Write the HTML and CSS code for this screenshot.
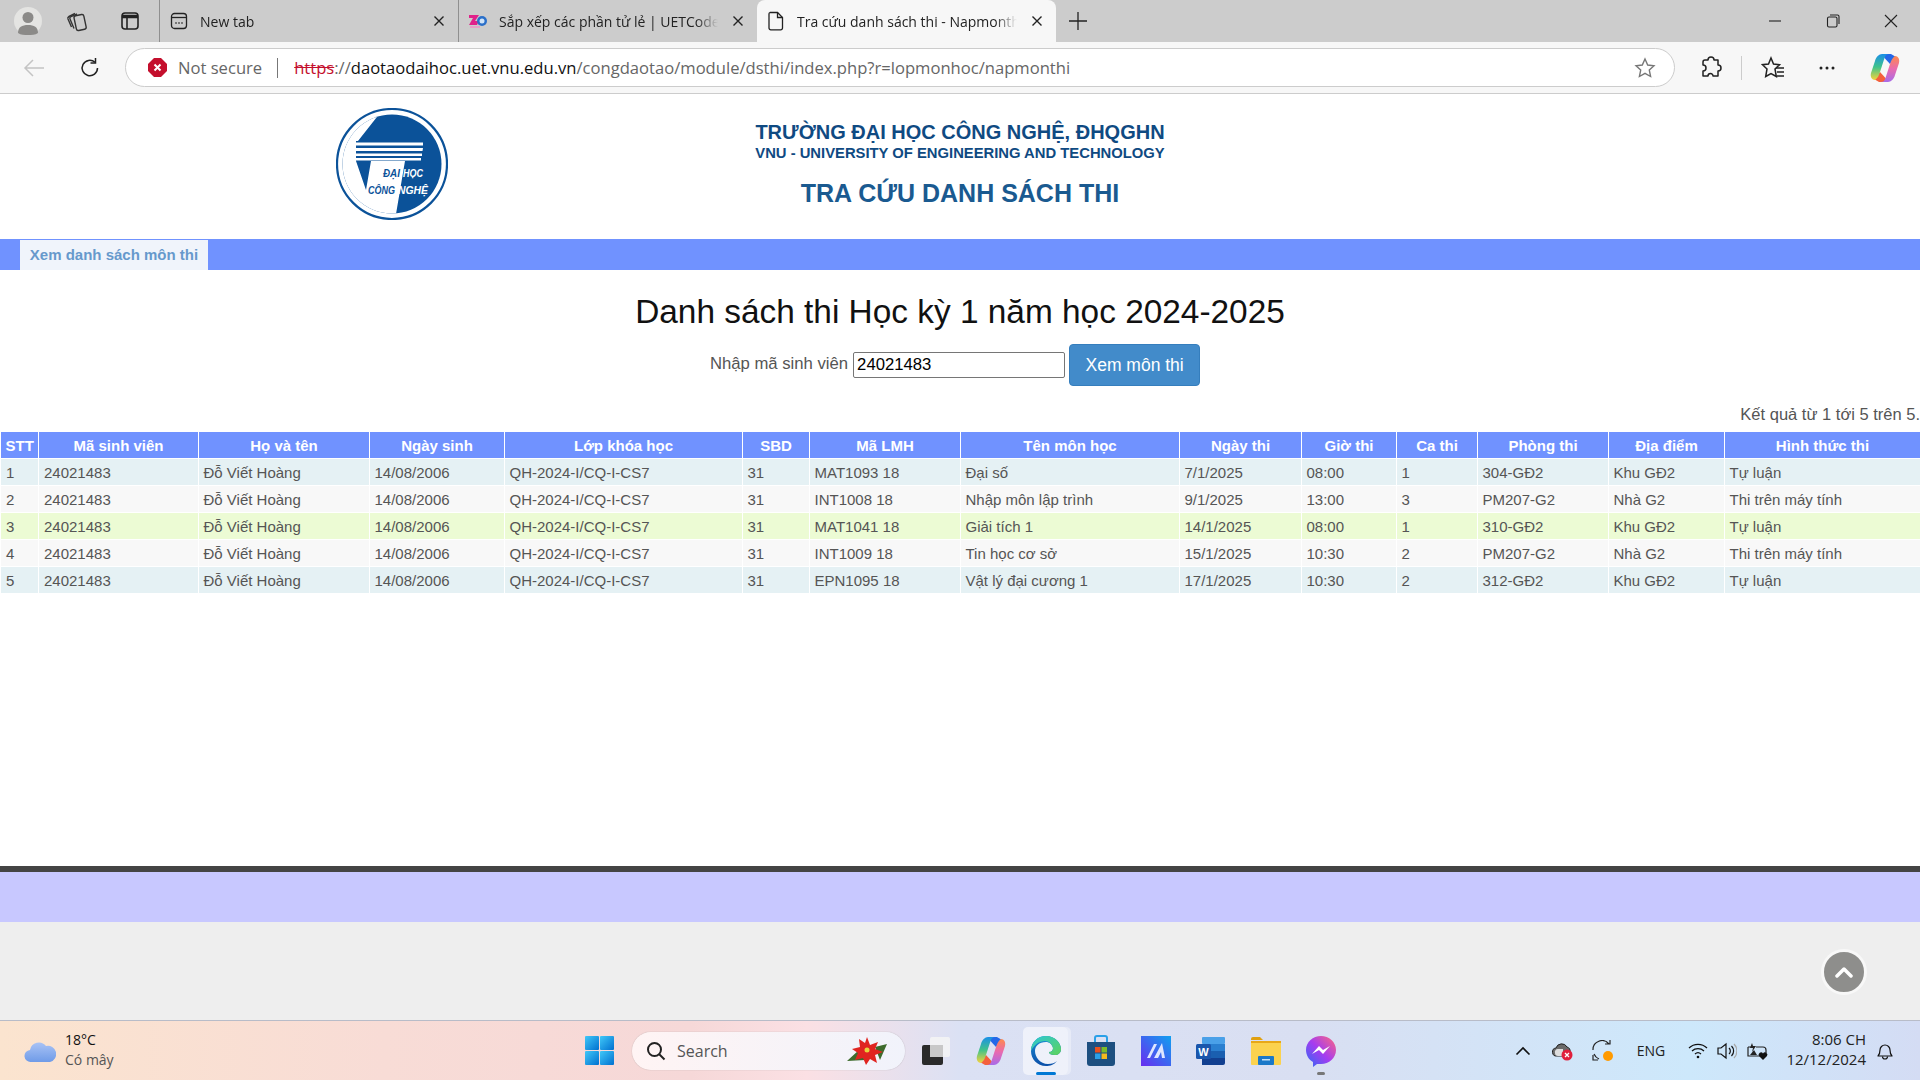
FILE: index.html
```html
<!DOCTYPE html>
<html lang="vi">
<head>
    <meta charset="UTF-8">
    <title>Tra cứu danh sách thi - Napmonthi</title>
    <link rel="stylesheet" href="styles.css">
</head>
<body>
    <svg class="defs" width="0" height="0">
        <defs>
            <linearGradient id="cpA" x1="0" y1="0" x2="0" y2="1"><stop offset="0" stop-color="#1a8fe8"/><stop offset=".5" stop-color="#3fc38a"/><stop offset="1" stop-color="#f5d33c"/></linearGradient>
            <linearGradient id="cpB" x1="0" y1="0" x2="0" y2="1"><stop offset="0" stop-color="#ff8a4c"/><stop offset=".5" stop-color="#e86ab0"/><stop offset="1" stop-color="#a86be8"/></linearGradient>
            <linearGradient id="edgeA" x1="0" y1="0" x2="1" y2="1"><stop offset="0" stop-color="#2bc7d8"/><stop offset="1" stop-color="#5fd35a"/></linearGradient>
            <linearGradient id="edgeB" x1="0" y1="0" x2="0" y2="1"><stop offset="0" stop-color="#1a8fd8"/><stop offset="1" stop-color="#0c4fa8"/></linearGradient>
            <linearGradient id="appG" x1="0" y1="1" x2="1" y2="0"><stop offset="0" stop-color="#6a2cf0"/><stop offset="1" stop-color="#10a0f0"/></linearGradient>
            <linearGradient id="msgG" x1="0" y1="1" x2="1" y2="0"><stop offset="0" stop-color="#2a6cf5"/><stop offset=".5" stop-color="#a63cf0"/><stop offset="1" stop-color="#ff6a7c"/></linearGradient>
            <linearGradient id="winG" x1="0" y1="0" x2="1" y2="1"><stop offset="0" stop-color="#40c8f8"/><stop offset="1" stop-color="#0070d0"/></linearGradient>
            <symbol id="copilot" viewBox="0 0 32 32">
                <path d="M13 2h9l5 3-6 7-5.500-6z" fill="#2468e8"/>
                <path d="M19 30h-9l-5-3 6-7 5.500 6z" fill="#f4603c"/>
                <path d="M13 2h7c-2 0-3.500 1-4.500 4L11 20c-1 3-2 6-5 8-3 0-5-3-4-7L6 9c1-4 4-7 7-7z" fill="url(#cpA)"/>
                <path d="M19 30h-7c2 0 3.500-1 4.500-4L21 12c1-3 2-6 5-8 3 0 5 3 4 7l-4 12c-1 4-4 7-7 7z" fill="url(#cpB)"/>
            </symbol>
        </defs>
    </svg>

    <div class="tabstrip">
        <span class="profile">
            <svg width="28" height="28" viewBox="0 0 28 28"><circle cx="14" cy="14" r="14" fill="#e4e4e2"/><circle cx="14" cy="10.5" r="5.5" fill="#8b8a88"/><path d="M4 26c0-6 4-8 10-8s10 2 10 8c-3 2-6 2-10 2s-7 0-10-2z" fill="#8b8a88"/></svg>
        </span>
        <span class="strip-btn strip-btn-first">
            <svg width="22" height="22" viewBox="0 0 22 22" fill="none" stroke="#333" stroke-width="1.4"><rect x="9" y="5" width="10" height="15" rx="2" transform="rotate(-12 14 12)"/><path d="M8 18.5 4 9c-.4-1 0-2 1-2.400l6-2.600"/><path d="M5.500 17 2 9c-.4-1 0-2 1-2.500l6-3"/></svg>
        </span>
        <span class="strip-btn strip-btn-views">
            <svg width="20" height="20" viewBox="0 0 20 20" fill="none" stroke="#222" stroke-width="1.6"><rect x="2" y="2" width="16" height="16" rx="3"/><path d="M2 5.500h16" stroke-width="3.500"/><path d="M7 6v12"/></svg>
        </span>

        <div class="tab">
            <svg class="tab-icon" width="18" height="18" viewBox="0 0 18 18" fill="none" stroke="#222" stroke-width="1.3"><rect x="1.500" y="1.500" width="15" height="15" rx="3"/><path d="M1.500 5.500h15"/><path d="M5.500 11h1M8.500 11h1M11.500 11h1" stroke-width="1.800"/></svg>
            <span class="tab-title">New tab</span>
            <svg class="tab-close" width="12" height="12" viewBox="0 0 12 12" stroke="#222" stroke-width="1.400"><path d="M1.500 1.500l9 9M10.500 1.500l-9 9"/></svg>
        </div>
        <div class="tab">
            <svg class="tab-icon" width="18" height="18" viewBox="0 0 18 18"><path d="M0 3h10L6 9h4l-2 4H0l4-7H0z" fill="#e0218a"/><circle cx="13" cy="9" r="5" fill="#2a6fc9"/><circle cx="13" cy="9" r="2.500" fill="#cfe3f7"/><rect x="1" y="14" width="10" height="2" fill="#e8a0c8"/></svg>
            <span class="tab-title">Sắp xếp các phần tử lẻ | UETCode</span>
            <svg class="tab-close" width="12" height="12" viewBox="0 0 12 12" stroke="#222" stroke-width="1.400"><path d="M1.500 1.500l9 9M10.500 1.500l-9 9"/></svg>
        </div>
        <div class="tab tab-active">
            <svg class="tab-icon" width="18" height="20" viewBox="0 0 18 20" fill="none" stroke="#222" stroke-width="1.300"><path d="M3 1.500h7.500l5 5V17a1.800 1.800 0 0 1-1.800 1.800H3.800A1.800 1.800 0 0 1 2 17V3a1.500 1.500 0 0 1 1-1.500z"/><path d="M10.500 1.500v5h5"/></svg>
            <span class="tab-title">Tra cứu danh sách thi - Napmonthi</span>
            <svg class="tab-close" width="12" height="12" viewBox="0 0 12 12" stroke="#222" stroke-width="1.400"><path d="M1.500 1.500l9 9M10.500 1.500l-9 9"/></svg>
        </div>
        <span class="new-tab">
            <svg width="18" height="18" viewBox="0 0 18 18" stroke="#222" stroke-width="1.300"><path d="M9 0v18M0 9h18"/></svg>
        </span>

        <div class="window-btns">
            <span class="window-btn"><svg width="14" height="14" viewBox="0 0 14 14" stroke="#222" stroke-width="1.100"><path d="M1 7h12"/></svg></span>
            <span class="window-btn"><svg width="14" height="14" viewBox="0 0 14 14" fill="none" stroke="#222" stroke-width="1.100"><rect x="1.500" y="3" width="9.500" height="10" rx="1.500"/><path d="M4 1h7.500A1.500 1.500 0 0 1 13 2.500V10"/></svg></span>
            <span class="window-btn"><svg width="14" height="14" viewBox="0 0 14 14" stroke="#222" stroke-width="1.100"><path d="M1 1l12 12M13 1L1 13"/></svg></span>
        </div>
    </div>

    <div class="toolbar">
        <span class="tool-btn tool-back">
            <svg width="22" height="20" viewBox="0 0 22 20" fill="none" stroke="#c4c4c4" stroke-width="1.500"><path d="M21 10H2M10 2l-8 8 8 8"/></svg>
        </span>
        <span class="tool-btn tool-reload">
            <svg width="22" height="22" viewBox="0 0 22 22" fill="none" stroke="#222" stroke-width="1.500"><path d="M18.500 11a7.700 7.700 0 1 1-2.500-5.700"/><path d="M16.500 1v5h-5"/></svg>
        </span>
        <div class="address">
            <svg class="secure-icon" width="19" height="19" viewBox="0 0 19 19"><path d="M6 0h7l6 6v7l-6 6H6l-6-6V6z" fill="#c40f2d"/><path d="M6.500 6.500l6 6M12.500 6.500l-6 6" stroke="#fff" stroke-width="2"/></svg>
            <span class="secure-text">Not secure</span>
            <span class="address-sep"></span>
            <span class="url"><span class="url-https">https</span>://<span class="url-host">daotaodaihoc.uet.vnu.edu.vn</span>/congdaotao/module/dsthi/index.php?r=lopmonhoc/napmonthi</span>
            <svg class="star-icon" width="22" height="22" viewBox="0 0 22 22" fill="none" stroke="#777" stroke-width="1.400"><path d="M11 2l2.700 6 6.300.7-4.700 4.400 1.300 6.400-5.600-3.200-5.600 3.200 1.300-6.400L2 8.700 8.300 8z"/></svg>
        </div>
        <span class="tool-btn tool-ext">
            <svg width="22" height="24" viewBox="0 0 22 24" fill="none" stroke="#222" stroke-width="1.500"><path d="M8 4a3 3 0 0 1 6 0h4v5a3 3 0 0 1 0 6v5h-5a2.500 2.500 0 0 0-5 0H3v-5a3 3 0 0 0 0-6V6a2 2 0 0 1 2-2z" stroke-linejoin="round"/></svg>
        </span>
        <span class="tool-sep"></span>
        <span class="tool-btn tool-fav">
            <svg width="24" height="24" viewBox="0 0 24 24" fill="none" stroke="#222" stroke-width="1.500"><path d="M10 2l2.500 6 6 .7-4.500 4.300 1.300 7.500-5.300-3-5.300 3L6 13 1.500 8.700l6-.7z"/><path d="M15 12h8M16 16h7M16 20h7" stroke-width="1.300"/></svg>
        </span>
        <span class="tool-btn tool-more">
            <svg width="18" height="4" viewBox="0 0 18 4" fill="#222"><circle cx="3" cy="2" r="1.500"/><circle cx="9" cy="2" r="1.500"/><circle cx="15" cy="2" r="1.500"/></svg>
        </span>
        <svg class="tool-copilot" width="32" height="32"><use href="#copilot"/></svg>
    </div>

    <div class="page">
        <header class="site-head">
            <svg class="logo" width="112" height="112" viewBox="0 0 112 112">
                <clipPath id="logoDisc"><circle cx="56" cy="56" r="49.500"/></clipPath>
                <circle cx="56" cy="56" r="55" fill="#fff" stroke="#0b5299" stroke-width="2.200"/>
                <g clip-path="url(#logoDisc)">
                    <rect width="112" height="112" fill="#0b5299"/>
                    <path d="M0 0h48L22 33h-2v20l10 29 5-29h34l-10 59H0z" fill="#fff"/>
                    <path d="M20 34.500h67v3H20zM20 40h67l-.5 3H20zM20 45.500h66v2.500H20zM20 50h65v2.500H20z" fill="#fff"/>
                </g>
                <text class="logo-dark" x="47" y="69" textLength="17" lengthAdjust="spacingAndGlyphs">ĐẠI</text>
                <text class="logo-light" x="67" y="69" textLength="20" lengthAdjust="spacingAndGlyphs">HỌC</text>
                <text class="logo-dark" x="32" y="86" textLength="27" lengthAdjust="spacingAndGlyphs">CÔNG</text>
                <text class="logo-light" x="62" y="86" textLength="30" lengthAdjust="spacingAndGlyphs">NGHỆ</text>
            </svg>
            <div class="site-title">
                <div class="site-name">TRƯỜNG ĐẠI HỌC CÔNG NGHỆ, ĐHQGHN</div>
                <div class="site-sub">VNU - UNIVERSITY OF ENGINEERING AND TECHNOLOGY</div>
                <div class="site-lookup">TRA CỨU DANH SÁCH THI</div>
            </div>
        </header>

        <nav class="menu"><a class="menu-item">Xem danh sách môn thi</a></nav>

        <main class="content">
            <h1>Danh sách thi Học kỳ 1 năm học 2024-2025</h1>
            <div class="search-row">
                <label for="msv">Nhập mã sinh viên</label>
                <input type="text" id="msv" value="24021483">
                <button class="btn">Xem môn thi</button>
            </div>
            <div class="summary">Kết quả từ 1 tới 5 trên 5.</div>
            <table class="exam-table">
                <colgroup>
                    <col class="c-stt"><col class="c-msv"><col class="c-name"><col class="c-dob"><col class="c-class">
                    <col class="c-sbd"><col class="c-lmh"><col class="c-subject"><col class="c-date"><col class="c-time">
                    <col class="c-shift"><col class="c-room"><col class="c-place"><col class="c-form">
                </colgroup>
                <thead>
                    <tr>
                        <th>STT</th><th>Mã sinh viên</th><th>Họ và tên</th><th>Ngày sinh</th><th>Lớp khóa học</th>
                        <th>SBD</th><th>Mã LMH</th><th>Tên môn học</th><th>Ngày thi</th><th>Giờ thi</th>
                        <th>Ca thi</th><th>Phòng thi</th><th>Địa điểm</th><th>Hình thức thi</th>
                    </tr>
                </thead>
                <tbody>
                    <tr class="row-odd">
                        <td>1</td><td>24021483</td><td>Đỗ Viết Hoàng</td><td>14/08/2006</td><td>QH-2024-I/CQ-I-CS7</td>
                        <td>31</td><td>MAT1093 18</td><td>Đại số</td><td>7/1/2025</td><td>08:00</td>
                        <td>1</td><td>304-GĐ2</td><td>Khu GĐ2</td><td>Tự luận</td>
                    </tr>
                    <tr class="row-even">
                        <td>2</td><td>24021483</td><td>Đỗ Viết Hoàng</td><td>14/08/2006</td><td>QH-2024-I/CQ-I-CS7</td>
                        <td>31</td><td>INT1008 18</td><td>Nhập môn lập trình</td><td>9/1/2025</td><td>13:00</td>
                        <td>3</td><td>PM207-G2</td><td>Nhà G2</td><td>Thi trên máy tính</td>
                    </tr>
                    <tr class="row-hover">
                        <td>3</td><td>24021483</td><td>Đỗ Viết Hoàng</td><td>14/08/2006</td><td>QH-2024-I/CQ-I-CS7</td>
                        <td>31</td><td>MAT1041 18</td><td>Giải tích 1</td><td>14/1/2025</td><td>08:00</td>
                        <td>1</td><td>310-GĐ2</td><td>Khu GĐ2</td><td>Tự luận</td>
                    </tr>
                    <tr class="row-even">
                        <td>4</td><td>24021483</td><td>Đỗ Viết Hoàng</td><td>14/08/2006</td><td>QH-2024-I/CQ-I-CS7</td>
                        <td>31</td><td>INT1009 18</td><td>Tin học cơ sở</td><td>15/1/2025</td><td>10:30</td>
                        <td>2</td><td>PM207-G2</td><td>Nhà G2</td><td>Thi trên máy tính</td>
                    </tr>
                    <tr class="row-odd">
                        <td>5</td><td>24021483</td><td>Đỗ Viết Hoàng</td><td>14/08/2006</td><td>QH-2024-I/CQ-I-CS7</td>
                        <td>31</td><td>EPN1095 18</td><td>Vật lý đại cương 1</td><td>17/1/2025</td><td>10:30</td>
                        <td>2</td><td>312-GĐ2</td><td>Khu GĐ2</td><td>Tự luận</td>
                    </tr>
                </tbody>
            </table>
        </main>

        <footer class="site-foot">
            <div class="foot-bar"></div>
            <div class="foot-rest"></div>
        </footer>

        <a class="to-top">
            <svg width="18" height="12" viewBox="0 0 18 12" fill="none" stroke="#fff" stroke-width="3.500" stroke-linecap="round" stroke-linejoin="round"><path d="M2 10l7-7 7 7"/></svg>
        </a>
    </div>

    <div class="taskbar">
        <div class="weather">
            <svg width="32" height="24" viewBox="0 0 32 24"><defs><linearGradient id="cloudG" x1="0" y1="0" x2="0" y2="1"><stop offset="0" stop-color="#a9c3f5"/><stop offset="1" stop-color="#6f9be8"/></linearGradient></defs><path d="M7 23a6 6 0 0 1-1-12 9 9 0 0 1 16-4 7 7 0 0 1 4 16z" fill="url(#cloudG)"/></svg>
            <div class="weather-text">
                <div class="weather-temp">18°C</div>
                <div class="weather-desc">Có mây</div>
            </div>
        </div>
        <span class="tb-start">
            <svg width="29" height="29" viewBox="0 0 29 29" fill="url(#winG)"><rect width="14" height="14" rx="1"/><rect x="15" width="14" height="14" rx="1"/><rect y="15" width="14" height="14" rx="1"/><rect x="15" y="15" width="14" height="14" rx="1"/></svg>
        </span>
        <div class="tb-search">
            <svg width="20" height="20" viewBox="0 0 20 20" fill="none" stroke="#222" stroke-width="2"><circle cx="8.500" cy="8.500" r="6.500"/><path d="M13 13l5.500 5.500"/></svg>
            <span class="tb-search-text">Search</span>
            <svg class="tb-flower" width="44" height="30" viewBox="0 0 44 30"><path d="M2 25l12-11 6 10zM42 8l-12 3 5 13z" fill="#3d6b2c"/><path d="M22 1l3 8 8-3-3 7 8 3-8 3 2 8-7-4-4 6-3-7-8 2 3-7-6-4 8-2-1-8 6 4z" fill="#e02420"/><circle cx="22" cy="14" r="2.500" fill="#e8d23c"/></svg>
        </div>
        <div class="tb-apps">
            <span class="tb-app">
                <svg width="30" height="30" viewBox="0 0 30 30"><rect x="9" y="1" width="20" height="20" rx="2" fill="#f5f5f5" opacity=".85"/><rect x="1" y="9" width="21" height="20" rx="2" fill="#2a2a2a"/><rect x="9" y="9" width="13" height="12" fill="#c8c8c8"/></svg>
            </span>
            <span class="tb-app">
                <svg width="32" height="32"><use href="#copilot"/></svg>
            </span>
            <span class="tb-app tb-app-on">
                <svg width="32" height="32" viewBox="0 0 32 32"><path d="M1 16C1 7 8 1 16 1c9 0 15 7 15 13 0 4-3 6-6 6-4 0-6-1-6-3 3 0 4-2 4-4-1-4-4-6-7-6C9 7 5 11 5 16c0 6 5 13 13 13 4 0 7-1 9-3-3 4-7 5-11 5C7 31 1 24 1 16z" fill="url(#edgeB)"/><path d="M1 16C1 7 8 1 16 1c9 0 15 7 15 13 0 4-3 6-6 6-4 0-6-1-6-3 3 0 4-2 4-4-1-4-4-7-8-7-6 0-11 4-14 10z" fill="url(#edgeA)"/></svg>
            </span>
            <span class="tb-app">
                <svg width="30" height="32" viewBox="0 0 30 32"><path d="M9 7V3a2 2 0 0 1 2-2h8a2 2 0 0 1 2 2v4" fill="none" stroke="#2aa0e8" stroke-width="2"/><path d="M1 7h28v21a3 3 0 0 1-3 3H4a3 3 0 0 1-3-3z" fill="#1d4f80"/><rect x="9" y="12" width="5.500" height="5.500" fill="#e8501e"/><rect x="15.500" y="12" width="5.500" height="5.500" fill="#7cbb2a"/><rect x="9" y="18.500" width="5.500" height="5.500" fill="#2aa0e8"/><rect x="15.500" y="18.500" width="5.500" height="5.500" fill="#f5b91e"/></svg>
            </span>
            <span class="tb-app">
                <svg width="30" height="30" viewBox="0 0 30 30"><rect width="30" height="30" fill="url(#appG)"/><path d="M6 22l7-14h3l-7 14zM13 22l8-15 3 15h-3l-1-6-3 6z" fill="#dfe6ff"/></svg>
            </span>
            <span class="tb-app">
                <svg width="30" height="30" viewBox="0 0 30 30"><rect x="6" y="1" width="23" height="7" rx="1" fill="#4aa0e8"/><rect x="6" y="8" width="23" height="7" fill="#2a7fd0"/><rect x="6" y="15" width="23" height="7" fill="#1a5fb0"/><path d="M6 22h23v5a2 2 0 0 1-2 2H6z" fill="#123f90"/><rect x="0" y="8" width="15" height="15" rx="1.500" fill="#1a56ac"/><text class="word-w" x="7.500" y="20">W</text></svg>
            </span>
            <span class="tb-app">
                <svg width="30" height="30" viewBox="0 0 30 30"><path d="M0 3a2 2 0 0 1 2-2h7l3 3h-12z" fill="#e0a010"/><path d="M0 5h30v23a1 1 0 0 1-1 1H1a1 1 0 0 1-1-1z" fill="#fbd24e"/><path d="M0 5h30v2H0z" fill="#e8a818"/><rect x="7" y="20" width="16" height="9" rx="1" fill="#1a78c8"/><rect x="11" y="23" width="8" height="1.500" fill="#bfe0f7"/></svg>
            </span>
            <span class="tb-app tb-app-open">
                <svg width="30" height="32" viewBox="0 0 30 32"><path d="M15 1c8 0 15 6 15 14s-7 14-15 14h-4l-4 3v-5C3 25 0 20 0 15 0 7 7 1 15 1z" fill="url(#msgG)"/><path d="M6 19l7-8 4 4 7-4-7 8-4-4z" fill="#fff"/></svg>
            </span>
        </div>
        <div class="tray">
            <span class="tray-slot"><svg width="16" height="10" viewBox="0 0 16 10" fill="none" stroke="#111" stroke-width="1.600"><path d="M1.500 8.500L8 2l6.500 6.500"/></svg></span>
            <span class="tray-slot"><svg width="22" height="20" viewBox="0 0 22 20"><path d="M5 15a4 4 0 0 1-1-8 6 6 0 0 1 11-1 4 4 0 0 1 3 5v4z" fill="#6a6a6a" stroke="#222"/><path d="M3 12a3 3 0 0 1 3-4h5v7H6a3 3 0 0 1-3-3z" fill="#ddd"/><circle cx="15" cy="14" r="5.500" fill="#e0203c"/><path d="M13 12l4 4M17 12l-4 4" stroke="#fff" stroke-width="1.300"/></svg></span>
            <span class="tray-slot"><svg width="22" height="22" viewBox="0 0 22 22" fill="none" stroke="#222" stroke-width="1.200"><path d="M1 10a9 9 0 0 1 16-6M18 0v4h-5"/><path d="M2 14a9 9 0 0 0 5 5M1 15v5h5"/><circle cx="16" cy="16" r="5" fill="#ff9a00" stroke="none"/></svg></span>
            <span class="tray-lang">ENG</span>
            <span class="tray-icon tray-wifi"><svg width="20" height="16" viewBox="0 0 20 16" fill="none" stroke="#111" stroke-width="1.300"><path d="M1 5a13 13 0 0 1 18 0M4 8a9 9 0 0 1 12 0M7 11a4.500 4.500 0 0 1 6 0"/><circle cx="10" cy="14" r="1.300" fill="#111" stroke="none"/></svg></span>
            <span class="tray-icon tray-vol"><svg width="20" height="18" viewBox="0 0 20 18" fill="none" stroke="#111" stroke-width="1.200"><path d="M1 6h3l5-4v14l-5-4H1z"/><path d="M12 6a4 4 0 0 1 0 6M14.500 4a7 7 0 0 1 0 10"/><path d="M17 2a10 10 0 0 1 0 14" stroke="#aaa"/></svg></span>
            <span class="tray-icon tray-batt"><svg width="22" height="18" viewBox="0 0 22 18" fill="none" stroke="#222" stroke-width="1.200"><path d="M1 5h4M1 5v9h12M9 5h7a3 3 0 0 1 3 3v3"/><path d="M5 1L3 6h3l-1 4 4-6H6z" fill="#222" stroke="none"/><path d="M3 13l4-5 3 5z" fill="#222" stroke="none"/><path d="M16 18l-4-4a2 2 0 0 1 4-2.500 2 2 0 0 1 4 2.500z" fill="#111" stroke="none"/></svg></span>
            <div class="clock">
                <div>8:06 CH</div>
                <div>12/12/2024</div>
            </div>
            <span class="tray-icon tray-bell"><svg width="18" height="20" viewBox="0 0 18 20" fill="none" stroke="#111" stroke-width="1.200"><path d="M2 15c1.500-1.500 2-3 2-6a5 5 0 0 1 10 0c0 3 .5 4.500 2 6z" stroke-linejoin="round"/><path d="M6.500 15.500a2.500 2.500 0 0 0 5 0"/></svg></span>
        </div>
    </div>
</body>
</html>
```

FILE: styles.css
```css
* {
    box-sizing: border-box;
}

html, body {
    margin: 0;
    padding: 0;
    height: 1080px;
    overflow: hidden;
}

body {
    display: flex;
    flex-direction: column;
    font-family: "Liberation Sans", Arial, sans-serif;
    color: #555;
    background: #fff;
}

svg {
    display: block;
    flex: none;
}

.defs {
    position: absolute;
}

/* browser tabs */
.tabstrip {
    display: flex;
    align-items: center;
    height: 42px;
    background: #ccc;
    font-family: "Open Sans", sans-serif;
    font-size: 14px;
    color: #222;
}

.profile {
    margin-left: 14px;
}

.strip-btn {
    display: flex;
    justify-content: center;
    width: 44px;
}

.strip-btn-first {
    margin-left: 13px;
}

.strip-btn-views {
    margin-left: 9px;
    margin-right: 7px;
}

.tab {
    display: flex;
    align-items: center;
    gap: 12px;
    width: 299px;
    height: 42px;
    padding: 0 13px 0 10px;
    border-left: 1px solid #8f8f8f;
    background-clip: padding-box;
}

.tab .tab-title {
    flex: 1;
    min-width: 0;
    white-space: nowrap;
    overflow: hidden;
    -webkit-mask-image: linear-gradient(to right, #000 90%, transparent);
    mask-image: linear-gradient(to right, #000 90%, transparent);
}

.tab-close {
    margin-left: 2px;
}

.tab-active {
    border-left: none;
    background: #f7f7f7;
    border-radius: 8px 8px 0 0;
}

.new-tab {
    margin-left: 13px;
}

.window-btns {
    display: flex;
    margin-left: auto;
}

.window-btn {
    display: flex;
    justify-content: center;
    width: 58px;
}

/* address bar row */
.toolbar {
    display: flex;
    align-items: center;
    height: 52px;
    background: #f7f7f7;
    border-bottom: 1px solid #ccc;
    font-family: "Open Sans", sans-serif;
}

.tool-btn {
    display: flex;
    justify-content: center;
}

.tool-back {
    width: 24px;
    margin-left: 22px;
}

.tool-reload {
    width: 24px;
    margin-left: 32px;
}

.address {
    display: flex;
    align-items: center;
    width: 1550px;
    height: 39px;
    margin-left: 23px;
    padding: 0 18px 0 22px;
    background: #fff;
    border: 1.500px solid #ccc;
    border-radius: 20px;
    font-size: 16.600px;
}

.secure-text {
    margin-left: 11px;
    color: #666;
}

.address-sep {
    width: 1px;
    height: 20px;
    margin: 0 16px 0 15px;
    background: #777;
}

.url {
    flex: 1;
    color: #666;
    white-space: nowrap;
}

.url-https {
    color: #c40f2d;
    text-decoration: line-through;
}

.url-host {
    color: #111;
}

.tool-ext {
    width: 24px;
    margin-left: 24px;
}

.tool-sep {
    width: 1px;
    height: 24px;
    margin-left: 18px;
    background: #ccc;
}

.tool-fav {
    width: 24px;
    margin-left: 19px;
}

.tool-more {
    width: 24px;
    margin-left: 30px;
}

.tool-copilot {
    margin-left: 30px;
}

/* the school page */
.page {
    position: relative;
    flex: 1;
    display: flex;
    flex-direction: column;
    min-height: 0;
}

.site-head {
    display: grid;
    grid-template-columns: 1fr auto 1fr;
    align-items: start;
    height: 145px;
    padding-top: 14px;
}

.logo {
    margin-left: 336px;
}

.logo-dark, .logo-light {
    font-family: "Liberation Sans", sans-serif;
    font-size: 10.500px;
    font-weight: bold;
    font-style: italic;
}

.logo-dark {
    fill: #0b5299;
}

.logo-light {
    fill: #fff;
}

.site-title {
    text-align: center;
    font-weight: bold;
}

.site-name {
    margin-top: 12px;
    font-size: 20px;
    line-height: 24px;
    color: #0f4a82;
}

.site-sub {
    font-size: 14.800px;
    line-height: 19px;
    color: #0f4a82;
}

.site-lookup {
    margin-top: 15px;
    font-size: 25px;
    line-height: 30px;
    color: #1a5a90;
}

.menu {
    display: flex;
    height: 31px;
    padding: 1px 0 0 20px;
    background: #7092ff;
}

.menu-item {
    display: block;
    width: 188px;
    line-height: 30px;
    text-align: center;
    font-size: 15px;
    font-weight: bold;
    color: #6699cc;
    background: #f0f4fb;
}

.content {
    flex: 1;
}

h1 {
    margin: 21px 0 0;
    font-size: 33.400px;
    font-weight: normal;
    line-height: 42px;
    text-align: center;
    color: #111;
}

.search-row {
    display: flex;
    justify-content: center;
    align-items: center;
    gap: 4px;
    margin-top: 11px;
    padding-right: 10px;
    font-size: 16.700px;
}

.search-row label {
    margin-right: 1px;
    position: relative;
    top: -1px;
}

.search-row input {
    width: 212px;
    height: 26px;
    padding: 1px 3px;
    border: 1px solid #767676;
    border-radius: 2px;
    font-family: inherit;
    font-size: 16.700px;
    color: #000;
}

.btn {
    width: 131px;
    height: 42px;
    padding: 0;
    border: 1px solid #357ebd;
    border-radius: 4px;
    background: #428bca;
    font-family: inherit;
    font-size: 17.500px;
    color: #fff;
}

.summary {
    margin-top: 17px;
    font-size: 16.500px;
    line-height: 22px;
    text-align: right;
}

.exam-table {
    table-layout: fixed;
    width: 1920px;
    margin-top: 6px;
    border-collapse: collapse;
    font-size: 15px;
}

.c-stt { width: 38px; }
.c-msv { width: 160px; }
.c-name { width: 171px; }
.c-dob { width: 135px; }
.c-class { width: 238px; }
.c-sbd { width: 67px; }
.c-lmh { width: 151px; }
.c-subject { width: 219px; }
.c-date { width: 122px; }
.c-time { width: 95px; }
.c-shift { width: 81px; }
.c-room { width: 131px; }
.c-place { width: 116px; }
.c-form { width: 196px; }

.exam-table th, .exam-table td {
    height: 27px;
    padding: 0 4.500px;
    border: 1px solid #fff;
    white-space: nowrap;
    overflow: hidden;
}

.exam-table th {
    background: #7092ff;
    color: #fff;
    font-weight: bold;
    text-align: center;
}

.exam-table td {
    text-align: left;
}

.exam-table td:nth-child(-n+2) {
    padding-left: 5px;
}

.row-odd td {
    background: #e5f1f4;
}

.row-even td {
    background: #f8f8f8;
}

.row-hover td {
    background: #ecfbd4;
}

.site-foot {
    height: 154px;
    border-top: 6px solid #444;
}

.foot-bar {
    height: 50px;
    background: #c8c8ff;
}

.foot-rest {
    height: 98px;
    background: #eee;
}

.to-top {
    position: absolute;
    right: 53px;
    bottom: 25px;
    display: flex;
    justify-content: center;
    align-items: center;
    width: 46px;
    height: 46px;
    border: 3px solid #f8f8f8;
    border-radius: 50%;
    background: #8e8e8c;
}

/* windows taskbar */
.taskbar {
    display: flex;
    align-items: center;
    height: 60px;
    border-top: 1px solid #b8bcc8;
    background: linear-gradient(to right, #fbe4cf 0%, #f8dcd6 20%, #f6d8d8 36%, #fbe0e4 42%, #dbe1f4 50%, #d9dff2 68%, #cde8fb 88%, #d4dcf4 100%);
    font-family: "Open Sans", sans-serif;
    color: #222;
}

.weather {
    display: flex;
    align-items: center;
    gap: 9px;
    width: 571px;
    padding-left: 24px;
}

.weather-text {
    margin-top: -2px;
    font-size: 14px;
    line-height: 20px;
}

.weather-temp {
    color: #111;
}

.weather-desc {
    color: #555;
}

.tb-start {
    display: flex;
    justify-content: center;
    width: 56px;
}

.tb-search {
    display: flex;
    align-items: center;
    width: 273px;
    height: 38px;
    margin-left: 5px;
    padding: 0 16px 0 14px;
    border-radius: 19px;
    background: linear-gradient(to right, #fff4f4, #f1f3fb);
    box-shadow: 0 0 1px #999;
}

.tb-search-text {
    flex: 1;
    margin-left: 11px;
    font-size: 16px;
    color: #555;
}

.tb-apps {
    display: flex;
    margin-left: 3px;
}

.tb-app {
    position: relative;
    display: flex;
    justify-content: center;
    align-items: center;
    width: 55px;
    height: 48px;
}

.tb-app-on {
    width: 45px;
    margin: 0 5px;
    background: rgba(255, 255, 255, .55);
    border-radius: 5px;
    box-shadow: 3px 0 0 rgba(255, 255, 255, .35);
}

.tb-app-on::after, .tb-app-open::after {
    content: "";
    position: absolute;
    left: 50%;
    bottom: 0;
    height: 3px;
    border-radius: 2px;
}

.tb-app-on::after {
    width: 20px;
    margin-left: -10px;
    background: #0078d4;
}

.tb-app-open::after {
    width: 8px;
    margin-left: -4px;
    background: #777;
}

.word-w {
    font-family: "Liberation Sans", sans-serif;
    font-size: 11px;
    font-weight: bold;
    fill: #fff;
    text-anchor: middle;
}

.tray {
    display: flex;
    align-items: center;
    margin-left: auto;
    padding-right: 23px;
}

.tray-slot {
    display: flex;
    justify-content: center;
    width: 40px;
}

.tray-lang {
    width: 56px;
    text-align: center;
    font-size: 14px;
}

.tray-icon {
    display: flex;
    justify-content: center;
    width: 28px;
}

.tray-wifi {
    margin-left: 5px;
}

.tray-vol {
    margin-left: 1px;
}

.tray-batt {
    margin-left: 3px;
}

.clock {
    width: 94px;
    margin-top: -4px;
    text-align: right;
    font-size: 15px;
    line-height: 20px;
}

.tray-bell {
    width: 24px;
    margin-left: 7px;
}
```
